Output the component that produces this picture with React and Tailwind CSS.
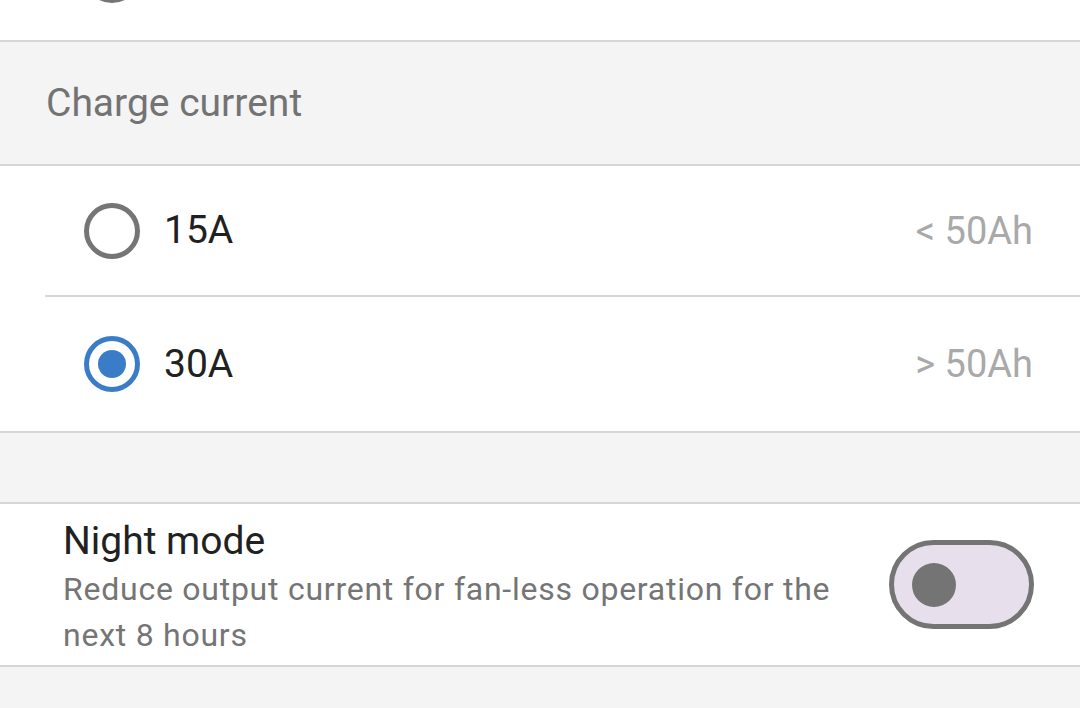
import { useState } from 'react';

function Radio({ checked }) {
  return (
    <div
      className={
        'w-[56px] h-[56px] rounded-full border-[5px] flex items-center justify-center shrink-0 ' +
        (checked ? 'border-[#3b7cc9]' : 'border-[#757575]')
      }
    >
      {checked && <div className="w-[28px] h-[28px] rounded-full bg-[#3b7cc9]" />}
    </div>
  );
}

function Toggle({ on, onClick }) {
  return (
    <button
      onClick={onClick}
      className="w-[145px] h-[89px] rounded-full border-[5px] border-[#747474] bg-[#e7e0ec] flex items-center px-[18px] shrink-0"
    >
      <div className="w-[44px] h-[44px] rounded-full bg-[#747474]" />
    </button>
  );
}

export default function App() {
  const [current, setCurrent] = useState('30A');
  const [night, setNight] = useState(false);

  const options = [
    { id: '15A', hint: '< 50Ah', h: 'h-[129px]' },
    { id: '30A', hint: '> 50Ah', h: 'h-[134px]' },
  ];

  return (
    <div className="w-[1080px] h-[708px] overflow-hidden bg-[#f4f4f4] font-['Roboto',sans-serif]">
      {/* tail of the previous list */}
      <div className="h-[40px] bg-white overflow-hidden">
        <div className="ml-[84px] -mt-[53px] w-[56px] h-[56px] rounded-full border-[5px] border-[#757575]" />
      </div>
      <div className="h-[2px] bg-[#d6d6d6]" />

      <div className="h-[122px] flex items-center pl-[46px]">
        <span className="text-[39px] text-[#737373] leading-none">Charge current</span>
      </div>
      <div className="h-[2px] bg-[#d6d6d6]" />

      <div className="bg-white">
        {options.map((o, i) => (
          <div key={o.id}>
            {i > 0 && <div className="ml-[45px] h-[2px] bg-[#d6d6d6]" />}
            <div
              onClick={() => setCurrent(o.id)}
              className={'flex items-center pl-[84px] pr-[47px] cursor-pointer ' + o.h}
            >
              <Radio checked={current === o.id} />
              <span className="ml-[24px] text-[39px] text-[#212121] leading-none">{o.id}</span>
              <span className="ml-auto text-[38px] text-[#a9a9a9] leading-none">{o.hint}</span>
            </div>
          </div>
        ))}
      </div>
      <div className="h-[2px] bg-[#d6d6d6]" />

      <div className="h-[69px]" />
      <div className="h-[2px] bg-[#d6d6d6]" />

      <div className="h-[161px] bg-white flex items-center pl-[63px] pr-[46px]">
        <div className="flex-1 pr-[40px] pt-[6px]">
          <div className="text-[39px] text-[#212121] leading-[46px]">Night mode</div>
          <div className="mt-[2px] text-[32px] tracking-[0.75px] text-[#757575] leading-[46px]">
            Reduce output current for fan-less operation for the next 8 hours
          </div>
        </div>
        <Toggle on={night} onClick={() => setNight(!night)} />
      </div>
      <div className="h-[2px] bg-[#d6d6d6]" />
    </div>
  );
}
